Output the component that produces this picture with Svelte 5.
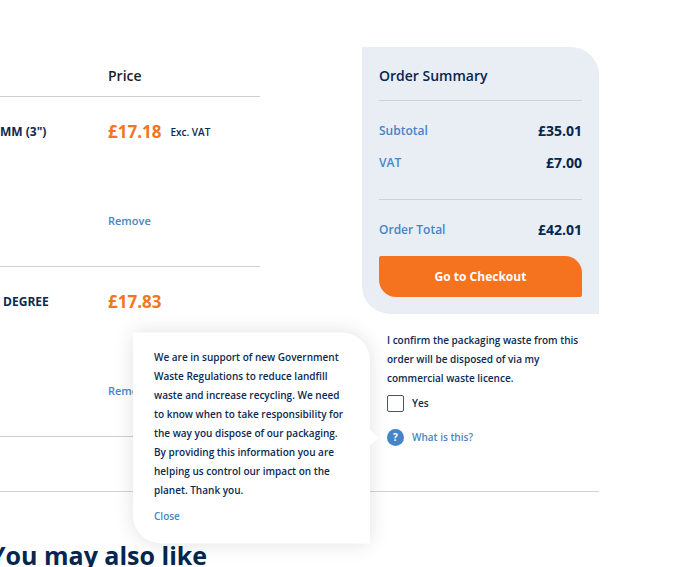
<script lang="ts">
  interface CartItem {
    id: number
    name: string
    price: string
    note?: string
  }

  let items = $state<CartItem[]>([
    { id: 1, name: 'MM (3")', price: '£17.18', note: 'Exc. VAT' },
    { id: 2, name: '\u00a0DEGREE', price: '£17.83' },
  ])

  const totals = [
    { label: 'Subtotal', value: '£35.01' },
    { label: 'VAT', value: '£7.00' },
  ]

  let wasteConfirmed = $state(false)
  let showHelp = $state(true)

  function removeItem(id: number) {
    items = items.filter((item) => item.id !== id)
  }
</script>

<main class="page">
  <div class="basket">
    <table class="cart">
      <thead>
        <tr>
          <th class="product" aria-label="Product"></th>
          <th>Price</th>
        </tr>
      </thead>
      <tbody>
        {#each items as item (item.id)}
          <tr>
            <td class="name">{item.name}</td>
            <td>
              <div class="price-cell">
                <div class="price-line">
                  <span class="price">{item.price}</span>
                  {#if item.note}
                    <span class="note">{item.note}</span>
                  {/if}
                </div>
                <button type="button" class="link remove" onclick={() => removeItem(item.id)}>
                  Remove
                </button>
              </div>
            </td>
          </tr>
        {/each}
      </tbody>
    </table>

    <aside class="side">
      <section class="summary">
        <h2>Order Summary</h2>
        <dl class="totals">
          {#each totals as total (total.label)}
            <div class="total-row">
              <dt>{total.label}</dt>
              <dd>{total.value}</dd>
            </div>
          {/each}
        </dl>
        <dl class="totals grand">
          <div class="total-row">
            <dt>Order Total</dt>
            <dd>£42.01</dd>
          </div>
        </dl>
        <button type="button" class="checkout">Go to Checkout</button>
      </section>

      <section class="waste">
        <p>
          I confirm the packaging waste from this order will be disposed of via my commercial
          waste licence.
        </p>
        <label class="confirm">
          <input type="checkbox" bind:checked={wasteConfirmed} />
          Yes
        </label>
        <div class="help">
          <button type="button" class="link help-toggle" onclick={() => (showHelp = !showHelp)}>
            <span class="help-icon" aria-hidden="true">?</span>
            What is this?
          </button>
          {#if showHelp}
            <div class="tooltip" role="tooltip">
              <p>
                We are in support of new Government Waste Regulations to reduce landfill waste and
                increase recycling. We need to know when to take responsibility for the way you
                dispose of our packaging. By providing this information you are helping us control
                our impact on the planet. Thank you.
              </p>
              <button type="button" class="link" onclick={() => (showHelp = false)}>Close</button>
            </div>
          {/if}
        </div>
      </section>
    </aside>
  </div>

  <h2 class="related">You may also like</h2>
</main>

<style>
  :global(body) {
    margin: 0;
    background: #fff;
    overflow: hidden;
  }

  .page {
    padding-right: 91px;
    font-family: 'Open Sans', 'Noto Sans', sans-serif;
    font-size: 10px;
    font-weight: 600;
    line-height: 19px;
    color: #0b2a52;
  }

  .basket {
    display: grid;
    grid-template-columns: minmax(0, 1fr) 237px;
    column-gap: 102px;
    align-items: start;
    padding: 47px 0 44px;
    border-bottom: 1px solid #cfd2d6;
  }

  .cart {
    width: 100%;
    border-collapse: collapse;
    table-layout: fixed;
  }

  th,
  td {
    padding: 0;
    text-align: left;
    vertical-align: top;
    border-bottom: 1px solid #ccd0d5;
    line-height: 20px;
  }

  th {
    height: 30px;
    padding-top: 19px;
    font-size: 14px;
    font-weight: 600;
    color: #1b1f24;
  }

  td {
    height: 144px;
    padding-top: 25px;
  }

  .product {
    width: 108px;
  }

  .name {
    font-size: 12px;
    font-weight: 700;
    white-space: nowrap;
  }

  .price-cell {
    display: flex;
    flex-direction: column;
    align-items: flex-start;
    gap: 69px;
  }

  .price-line {
    display: flex;
    align-items: center;
    gap: 9px;
  }

  .price {
    font-size: 17px;
    font-weight: 700;
    color: #f47521;
  }

  .link {
    padding: 0;
    border: 0;
    background: none;
    font: inherit;
    color: #4585c7;
    cursor: pointer;
  }

  .remove {
    font-size: 11px;
  }

  .summary {
    padding: 0 17px 17px;
    border-radius: 0 28px 0 28px;
    background: #e9eef5;
  }

  .summary h2 {
    margin: 0;
    padding: 19px 0 14px;
    border-bottom: 1px solid #cfd2d4;
    font-size: 14px;
    font-weight: 600;
    line-height: 20px;
    color: #04264f;
  }

  .totals {
    display: grid;
    gap: 12px;
    margin: 0;
    padding: 20px 0 26px;
  }

  .total-row {
    display: flex;
    justify-content: space-between;
    align-items: center;
    line-height: 20px;
  }

  .total-row dt {
    font-size: 12px;
    color: #4585c7;
  }

  .total-row dd {
    margin: 0;
    font-size: 14px;
    font-weight: 700;
    color: #04264f;
  }

  .grand {
    padding: 20px 0 16px;
    border-top: 1px solid #cfd2d4;
  }

  .checkout {
    display: block;
    width: 100%;
    padding: 11px 10px 10px;
    border: 0;
    border-radius: 2px 17px 2px 17px;
    background: #f5731f;
    color: #fff;
    font: inherit;
    font-size: 12px;
    font-weight: 700;
    line-height: 20px;
    cursor: pointer;
  }

  .waste {
    padding: 17px 17px 0 25px;
  }

  p {
    margin: 0;
  }

  .confirm,
  .help-toggle {
    display: flex;
    align-items: center;
    gap: 8px;
  }

  .confirm {
    margin: 6px 0 15px;
  }

  .confirm input {
    box-sizing: border-box;
    appearance: none;
    width: 17px;
    height: 17px;
    margin: 0;
    border: 1px solid #4a5565;
    border-radius: 2px;
    background: #fff;
  }

  .confirm input:checked {
    background: #4585c7;
  }

  .help {
    position: relative;
  }

  .help-icon {
    width: 17px;
    height: 17px;
    border-radius: 50%;
    background: #4585c7;
    color: #fff;
    font-weight: 700;
    line-height: 17px;
    text-align: center;
  }

  .tooltip {
    position: absolute;
    top: 50%;
    right: calc(100% + 17px);
    box-sizing: border-box;
    width: 237px;
    padding: 15px 21px 18px;
    border-radius: 0 28px 0 28px;
    background: #fff;
    box-shadow: 0 0 20px rgba(0, 0, 0, 0.12);
    transform: translateY(-50%);
  }

  .tooltip::after {
    content: '';
    position: absolute;
    top: 50%;
    left: 100%;
    border: 8px solid transparent;
    border-left-color: #fff;
    border-right: 0;
    transform: translateY(-50%);
  }

  .tooltip .link {
    margin-top: 7px;
  }

  .related {
    margin: 43px 0 0 -10px;
    font-size: 25px;
    font-weight: 700;
    line-height: 40px;
    color: #04264f;
  }
</style>
